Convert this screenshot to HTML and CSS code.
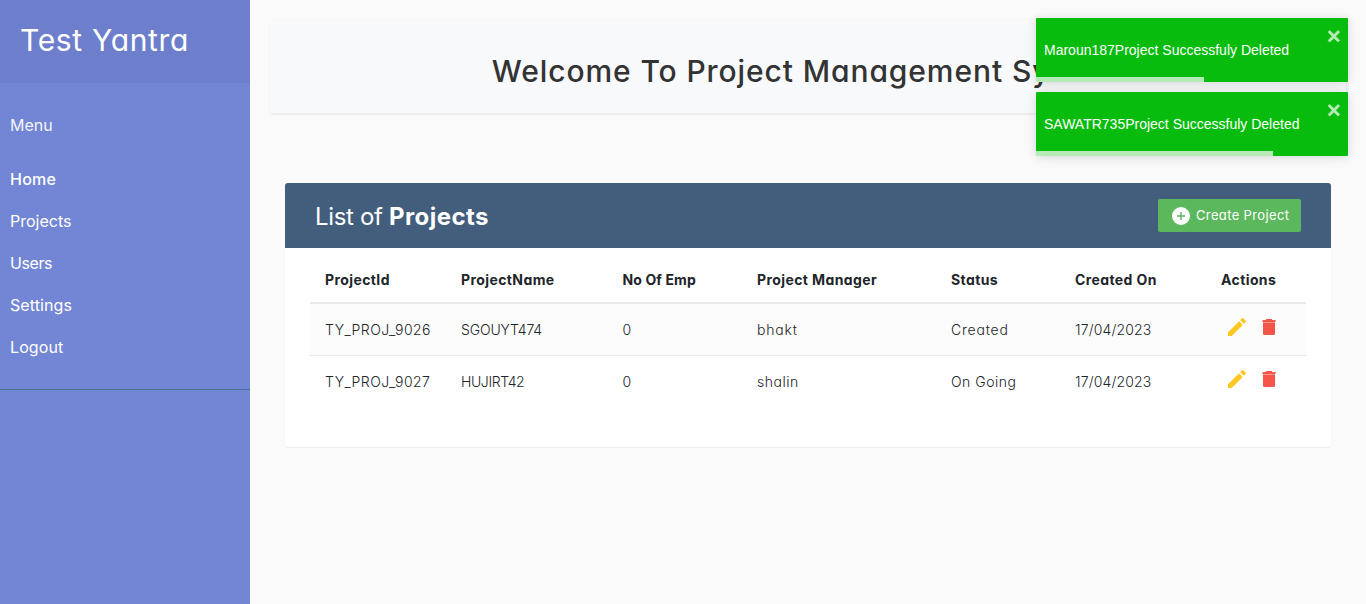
FILE: index.html
```html
<!DOCTYPE html>
<html lang="en">
<head>
<meta charset="utf-8">
<title>Project Management System</title>
<link rel="stylesheet" href="styles.css">
</head>
<body>
<svg class="defs" width="0" height="0">
  <symbol id="pencil" viewBox="0 0 24 24"><path fill="#ffc721" d="M3 17.250V21h3.750L17.810 9.940l-3.750-3.750L3 17.250zM20.710 7.040a1 1 0 0 0 0-1.410l-2.340-2.340a1 1 0 0 0-1.410 0l-1.830 1.830 3.750 3.750 1.830-1.830z"/></symbol>
  <symbol id="trash" viewBox="0 0 14 17"><path fill="#f6554a" d="M4 0h6v1h3.500v2H.5V1H4z"/><path fill="#f6554a" opacity=".6" d="M1 3h12v1H1z"/><path fill="#f6554a" d="M1 4h12v10.500a1.500 1.500 0 0 1-1.500 1.500h-9A1.500 1.500 0 0 1 1 14.500z"/></symbol>
  <symbol id="close" viewBox="0 0 14 16"><path fill="#fff" stroke="#fff" stroke-width=".7" fill-rule="evenodd" d="M7.710 8.230l3.750 3.750-1.480 1.480-3.750-3.750-3.750 3.750L1 11.980l3.750-3.750L1 4.480 2.480 3l3.750 3.750L9.980 3l1.480 1.480-3.750 3.750z"/></symbol>
</svg>
<div class="wrapper">
  <nav class="sidebar">
    <header class="brand">Test Yantra</header>
    <div class="menu">
      <p class="menu-title">Menu</p>
      <a class="menu-home">Home</a>
      <a class="menu-projects">Projects</a>
      <a class="menu-users">Users</a>
      <a class="menu-settings">Settings</a>
      <a class="menu-logout">Logout</a>
    </div>
  </nav>
  <main class="content">
    <section class="banner"><h1>Welcome To Project Management System</h1></section>
    <section class="card">
      <header class="card-head">
        <h2>List of <b>Projects</b></h2>
        <button class="create"><svg width="18" height="18" viewBox="0 0 18 18"><circle cx="9" cy="9" r="9" fill="#fff"/><path fill="#5cb85c" d="M8.300 5h1.400v3.300H13v1.400H9.700V13H8.300V9.700H5V8.300h3.300z"/></svg><span>Create Project</span></button>
      </header>
      <div class="card-body">
      <table>
        <colgroup><col class="col-id"><col class="col-name"><col class="col-emp"><col class="col-manager"><col class="col-status"><col class="col-created"><col class="col-actions"></colgroup>
        <thead><tr><th>ProjectId</th><th>ProjectName</th><th class="tight">No Of Emp</th><th>Project Manager</th><th>Status</th><th>Created On</th><th>Actions</th></tr></thead>
        <tbody>
        <tr><td class="id">TY_PROJ_9026</td><td class="name-long">SGOUYT474</td><td>0</td><td class="word">bhakt</td><td class="word">Created</td><td class="date">17/04/2023</td><td><div class="actions"><svg class="pencil"><use href="#pencil"/></svg><svg class="trash"><use href="#trash"/></svg></div></td></tr>
        <tr><td class="id">TY_PROJ_9027</td><td class="name-short">HUJIRT42</td><td>0</td><td class="manager">shalin</td><td class="manager">On Going</td><td class="date">17/04/2023</td><td><div class="actions"><svg class="pencil"><use href="#pencil"/></svg><svg class="trash"><use href="#trash"/></svg></div></td></tr>
        </tbody>
      </table>
      </div>
    </section>
  </main>
</div>
<aside class="toasts">
  <div class="toast"><span>Maroun187Project Successfuly Deleted</span><svg class="close"><use href="#close"/></svg><i class="progress" style="width:53.7%"></i></div>
  <div class="toast"><span>SAWATR735Project Successfuly Deleted</span><svg class="close"><use href="#close"/></svg><i class="progress" style="width:76%"></i></div>
</aside>
</body>
</html>
```

FILE: styles.css
```css
*{box-sizing:border-box}
body{margin:0;background:#fafafa;font-family:Inter,sans-serif;font-feature-settings:"cv11";color:#212529;overflow:hidden}
.defs{display:none}
.wrapper{display:flex;height:604px}

.sidebar{width:250px;background:#7386d5;color:#fff}
.brand{height:83px;background:#6d7fcc;padding:20px;font-size:30px;line-height:40px;letter-spacing:.67px}
.menu{font-size:16px;padding:20px 0 21px;border-bottom:1px solid #47748b}
.menu-title{margin:0 0 10px;padding:0 10px;line-height:45px;opacity:.92}
.menu a{display:block;padding:0 10px;line-height:42px}
.menu .menu-home{font-weight:500;letter-spacing:.25px}
.menu-users{letter-spacing:-.4px}
.menu-settings,.menu-logout{letter-spacing:.1px}

.content{flex:1;padding:20px 20px 0}
.banner{height:93px;background:#f8f9fb;box-shadow:1px 1px 3px rgba(0,0,0,.1);padding-top:33px}
h1{margin:0;font-size:30px;line-height:36px;font-weight:450;text-align:center;color:#333;letter-spacing:.9px;white-space:nowrap}

.card{height:264px;margin:70px 15px 0;background:#fff;border-radius:3px;box-shadow:0 1px 1px rgba(0,0,0,.05)}
.card-head{display:flex;align-items:flex-start;justify-content:space-between;height:65px;padding:16px 30px;background:#435d7d;color:#fff;border-radius:3px 3px 0 0}
h2{font-size:24px;line-height:35px;font-weight:400;margin:0;letter-spacing:-.35px}
h2 b{letter-spacing:.45px}
.create{display:flex;align-items:center;gap:6px;width:143px;height:33px;padding:0 0 0 14px;border:0;border-radius:2px;background:#5cb85c;color:#fff;font-family:inherit;font-feature-settings:inherit;font-size:13px;letter-spacing:.36px;white-space:nowrap}
.create span{padding-bottom:2px}
.card-body{padding:10px 25px}

table{width:996px;table-layout:fixed;border-collapse:separate;border-spacing:0;font-size:14px;white-space:nowrap}
.col-id{width:136px}
.col-name{width:161.500px}
.col-emp{width:134.500px}
.col-manager{width:194px}
.col-status{width:124px}
.col-created{width:146px}
.col-actions{width:100px}
th{height:46px;padding:0 0 2px 15px;border-bottom:2px solid #e9e9e9;font-weight:700;text-align:left;letter-spacing:.4px}
.tight{letter-spacing:.12px}
td{height:52px;padding:0 0 1px 15px;font-weight:300}
tbody tr:first-child td{padding-bottom:0;background:#fcfcfc;border-bottom:1px solid #e9e9e9}
.id{letter-spacing:.46px}
.word{letter-spacing:.8px}
.manager{letter-spacing:.5px}
.date{letter-spacing:.15px}
.name-long{letter-spacing:-.15px}
.name-short{letter-spacing:-.4px}
.actions{display:flex;align-items:center;gap:13px;padding:0 0 5px 4px}
.pencil{width:24px;height:24px}
.trash{width:14px;height:17px}

.toasts{position:absolute;right:18px;top:18px;width:312px;display:flex;flex-direction:column;gap:10px}
.toast{position:relative;height:64px;padding-left:8px;border-radius:1px;background:#07bc0c;color:#fff;box-shadow:0 1px 10px rgba(0,0,0,.1),0 2px 15px rgba(0,0,0,.05);font:14px/64px "Liberation Sans",Arial,sans-serif}
.close{position:absolute;right:6px;top:9px;width:15.500px;height:18px;opacity:.7}
.progress{position:absolute;left:0;bottom:0;height:5px;background:rgba(255,255,255,.7)}
```
